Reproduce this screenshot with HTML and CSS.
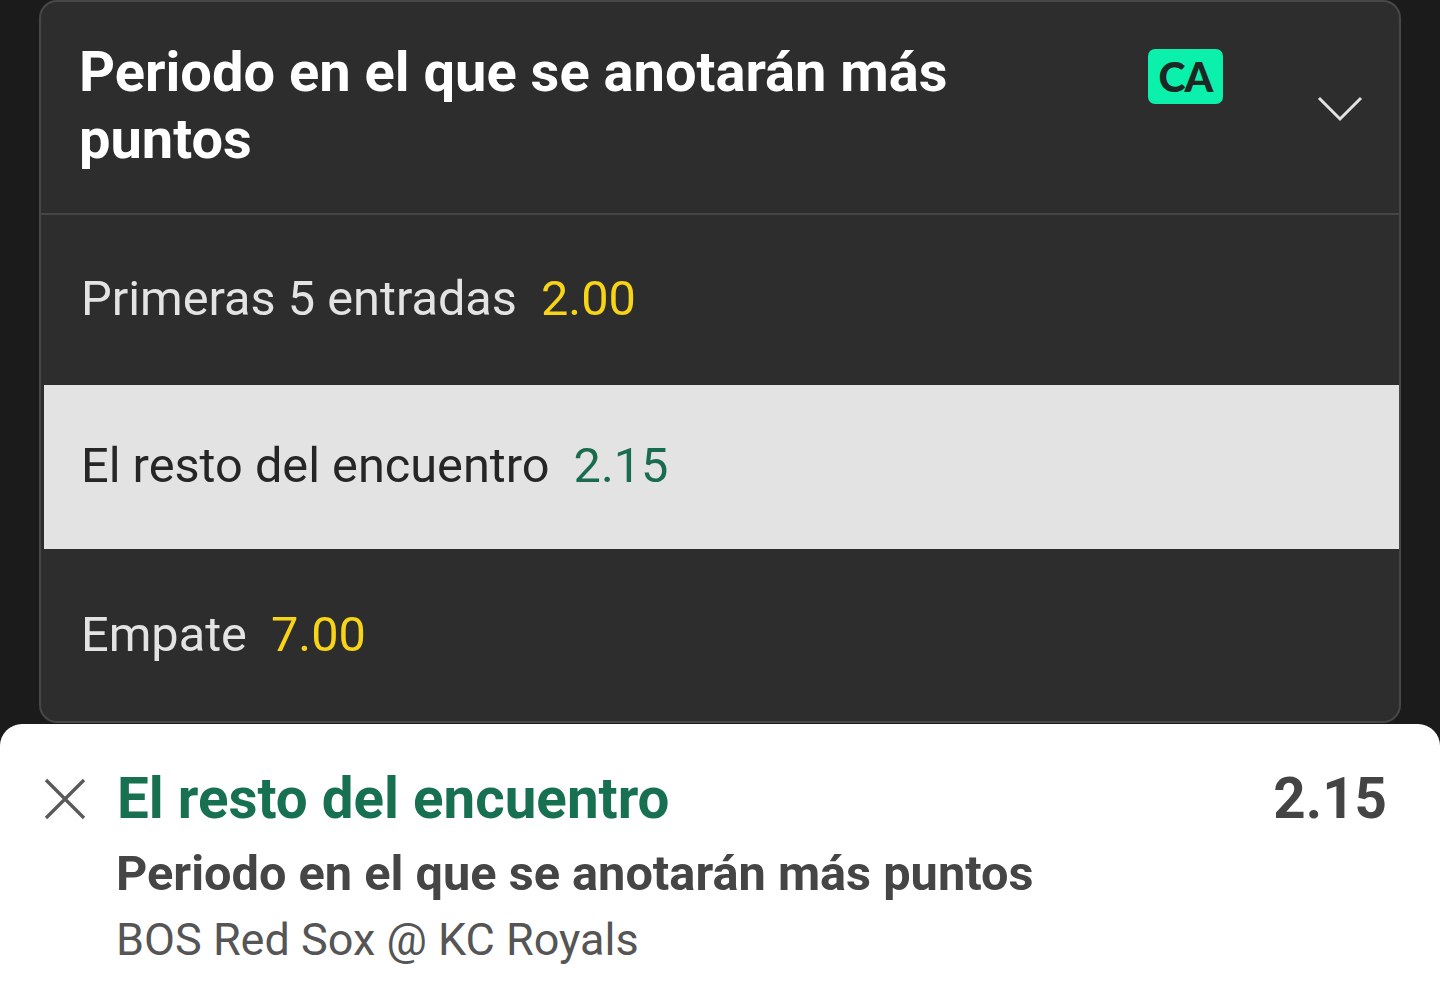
FILE: index.html
```html
<!DOCTYPE html>
<html lang="es">
<head>
<meta charset="utf-8">
<link rel="stylesheet" href="styles.css">
</head>
<body>
<div class="page">
  <section class="card">
    <header class="card-head">
      <h1 class="card-title">Periodo en el que se anotarán más puntos</h1>
      <span class="badge">CA</span>
      <svg class="chevron" width="48" height="30" viewBox="0 0 48 30" aria-hidden="true">
        <polyline points="3,4 24,25 45,4" fill="none" stroke="#e2e2e2" stroke-width="3"/>
      </svg>
    </header>
    <div class="row">
      <span class="label">Primeras 5 entradas</span>
      <span class="odds">2.00</span>
    </div>
    <div class="row row-selected">
      <span class="label">El resto del encuentro</span>
      <span class="odds">2.15</span>
    </div>
    <div class="row row-last">
      <span class="label">Empate</span>
      <span class="odds">7.00</span>
    </div>
  </section>
  <section class="sheet">
    <div class="sheet-top">
      <svg class="close" width="44" height="44" viewBox="0 0 44 44" aria-hidden="true">
        <path d="M3 3 L41 41 M41 3 L3 41" stroke="#5a5a5a" stroke-width="3.4" fill="none"/>
      </svg>
      <span class="sheet-title">El resto del encuentro</span>
      <span class="sheet-odds">2.15</span>
    </div>
    <div class="sheet-market">Periodo en el que se anotarán más puntos</div>
    <div class="sheet-event">BOS Red Sox @ KC Royals</div>
  </section>
</div>
</body>
</html>
```

FILE: styles.css
```css
html, body {
  margin: 0;
  padding: 0;
}
body {
  background: #1b1b1b;
  font-family: Roboto, "Liberation Sans", sans-serif;
  width: 1440px;
  height: 1004px;
  overflow: hidden;
}
.page {
  display: flex;
  flex-direction: column;
}
.card {
  margin: 0 39px;
  background: #2d2d2d;
  border: 2px solid #474747;
  border-radius: 18px;
  overflow: hidden;
}
.card-head {
  display: flex;
  align-items: flex-start;
  padding: 37px 35px 40px 38px;
  border-bottom: 2px solid #454545;
}
.card-title {
  margin: 0;
  width: 960px;
  font-size: 56px;
  line-height: 67px;
  font-weight: 700;
  color: #ffffff;
}
.badge {
  margin-left: auto;
  margin-top: 10px;
  width: 75px;
  height: 55px;
  border-radius: 7px;
  background: #0bf0aa;
  color: #1c2622;
  font-family: Lato, sans-serif;
  font-weight: 900;
  font-size: 41px;
  line-height: 55px;
  text-align: center;
  letter-spacing: -1px;
}
.chevron {
  margin-left: 93px;
  margin-top: 55px;
}
.row {
  display: flex;
  align-items: center;
  gap: 24px;
  height: 170px;
  padding-left: 40px;
  padding-bottom: 3px;
  box-sizing: border-box;
  font-size: 48.7px;
  color: #e3e3e3;
}
.row .odds {
  color: #f7d417;
}
.row-selected {
  height: 164px;
  margin: 0 0 2px 3px;
  padding-left: 37px;
  background: #e3e3e3;
  color: #262626;
}
.row-selected .odds {
  color: #1a6c4e;
}
.sheet {
  margin-top: 1px;
  background: #ffffff;
  border-radius: 22px 22px 0 0;
  height: 281px;
  padding: 42px 53px 0 43px;
  box-sizing: border-box;
}
.sheet-top {
  display: flex;
  align-items: center;
  height: 66px;
}
.close {
  flex: none;
}
.sheet-title {
  margin-left: 30px;
  font-size: 56.5px;
  font-weight: 700;
  color: #17704f;
}
.sheet-odds {
  margin-left: auto;
  font-size: 56.5px;
  font-weight: 700;
  color: #444444;
}
.sheet-market {
  margin: 14px 0 0 73px;
  font-size: 48.7px;
  line-height: 56px;
  font-weight: 700;
  color: #454545;
}
.sheet-event {
  margin: 12px 0 0 73px;
  font-size: 45px;
  line-height: 52px;
  color: #555555;
}
```
